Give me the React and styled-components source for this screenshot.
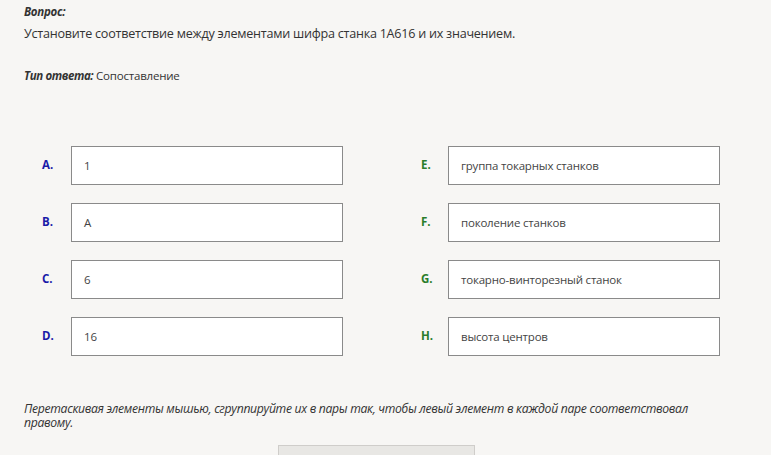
import React from 'react'
import styled, { createGlobalStyle } from 'styled-components';

const GlobalStyle = createGlobalStyle`
    html, body {
        margin: 0;
        padding: 0;
        background: #f7f6f4;
        font-family: "Open Sans", "Noto Sans", sans-serif;
        color: #333;
    }
`;

const left = [
    { key: 'A.', text: '1' },
    { key: 'B.', text: 'А' },
    { key: 'C.', text: '6' },
    { key: 'D.', text: '16' },
];

const right = [
    { key: 'E.', text: 'группа токарных станков' },
    { key: 'F.', text: 'поколение станков' },
    { key: 'G.', text: 'токарно-винторезный станок' },
    { key: 'H.', text: 'высота центров' },
];

function App() {
    return (
        <Page>
            <GlobalStyle />
            <Header>
                <Caption>Вопрос:</Caption>
                <Question>Установите соответствие между элементами шифра станка 1А616 и их значением.</Question>
                <AnswerType><em>Тип ответа:</em> Сопоставление</AnswerType>
            </Header>
            <Columns>
                <Column>
                    {left.map(item => (
                        <Row key={item.key}>
                            <Letter tone="blue" $w={29}>{item.key}</Letter>
                            <Box>{item.text}</Box>
                        </Row>
                    ))}
                </Column>
                <Column>
                    {right.map(item => (
                        <Row key={item.key}>
                            <Letter tone="green" $w={27}>{item.key}</Letter>
                            <Box>{item.text}</Box>
                        </Row>
                    ))}
                </Column>
            </Columns>
            <Hint>
                Перетаскивая элементы мышью, сгруппируйте их в пары так, чтобы левый элемент в каждой паре соответствовал правому.
            </Hint>
            <Footer>
                <Button />
            </Footer>
        </Page>
    )
}

const Page = styled.div`
    width: 771px;
    height: 455px;
    overflow: hidden;
    box-sizing: border-box;
    padding: 4px 24px 0 24px;
`;

const Header = styled.div`
    display: flex;
    flex-direction: column;
`;

const Caption = styled.div`
    font-size: 11.5px;
    font-weight: 700;
    font-style: italic;
    color: #333;
    line-height: 16px;
    letter-spacing: -0.3px;
`;

const Question = styled.div`
    margin-top: 4px;
    font-size: 12.6px;
    line-height: 20px;
    color: #333;
    letter-spacing: -0.25px;
`;

const AnswerType = styled.div`
    margin-top: 24px;
    font-size: 11.5px;
    line-height: 16px;
    color: #333;
    letter-spacing: -0.2px;
    em {
        font-weight: 700;
        letter-spacing: -0.4px;
    }
`;

const Columns = styled.div`
    display: grid;
    grid-template-columns: auto auto;
    justify-content: start;
    column-gap: 78px;
    margin-top: 62px;
    padding-left: 18px;
`;

const Column = styled.div`
    display: flex;
    flex-direction: column;
    gap: 18px;
`;

const Row = styled.div`
    display: flex;
    align-items: center;
    height: 39px;
`;

const Letter = styled.div`
    width: ${p => p.$w}px;
    flex-shrink: 0;
    font-size: 11.5px;
    font-weight: 700;
    color: ${p => (p.tone === 'green' ? '#2a7d2a' : '#1a1aa8')};
    margin-top: -3px;
`;

const Box = styled.div`
    box-sizing: border-box;
    width: 272px;
    flex-shrink: 0;
    height: 39px;
    background: #fff;
    border: 1px solid #8a8a8a;
    display: flex;
    align-items: center;
    padding-left: 12px;
    font-size: 11.5px;
    color: #444;
    letter-spacing: -0.2px;
`;

const Hint = styled.div`
    margin-top: 46px;
    font-size: 12.2px;
    line-height: 14px;
    font-style: italic;
    color: #333;
    width: 700px;
    letter-spacing: -0.3px;
`;

const Footer = styled.div`
    display: flex;
    padding-left: 254px;
    margin-top: 15px;
`;

const Button = styled.div`
    width: 197px;
    height: 30px;
    background: #e8e7e4;
    border: 1px solid #cfcdca;
    box-sizing: border-box;
`;

export default App;
